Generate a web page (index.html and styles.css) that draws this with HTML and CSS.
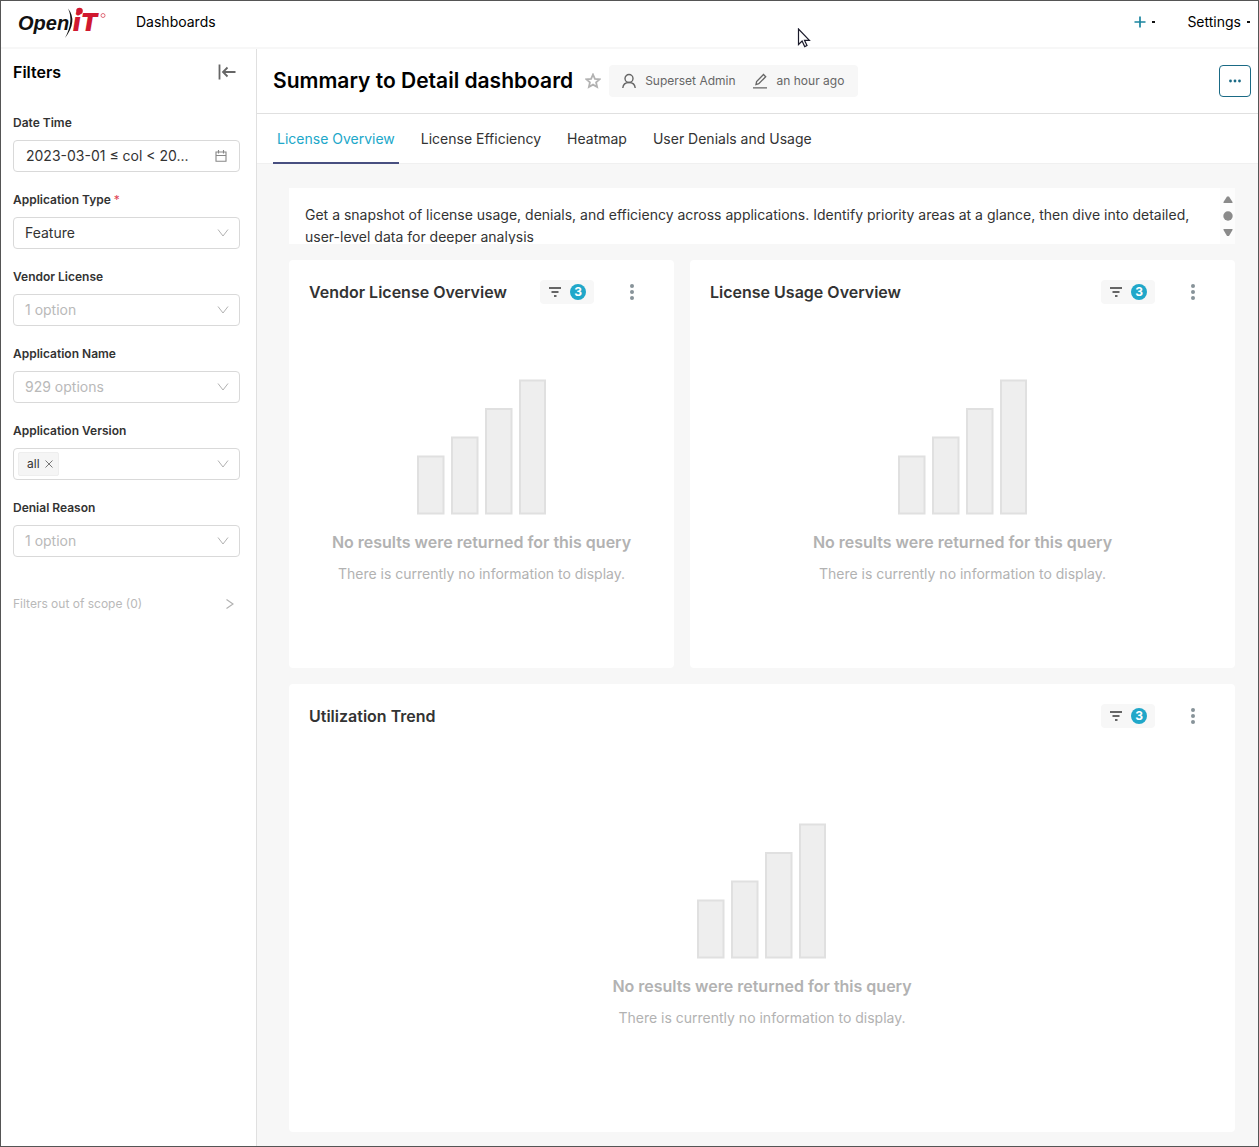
FILE: index.html
```html
<!DOCTYPE html>
<html lang="en">

<head>
    <meta charset="UTF-8">
    <meta name="viewport" content="width=device-width, initial-scale=1.0">
    <title>Summary to Detail dashboard</title>
    <link rel="stylesheet" href="styles.css">
</head>

<body>
    <!-- Shared icons -->
    <svg class="sprite" aria-hidden="true">
        <symbol id="chevron" viewBox="0 0 12 12">
            <path d="M1 2.5 L6 9 L11 2.5" fill="none" stroke="#b2b2b2" stroke-width="1" />
        </symbol>
        <symbol id="filter" viewBox="0 0 14 12">
            <path d="M1 2h12M3.500 6h7M6 10h2.500" fill="none" stroke="#666" stroke-width="2" />
        </symbol>
        <symbol id="dots" viewBox="0 0 4 16">
            <circle cx="2" cy="2" r="2" />
            <circle cx="2" cy="8" r="2" />
            <circle cx="2" cy="14" r="2" />
        </symbol>
        <symbol id="bars" viewBox="0 0 132 136">
            <g fill="#eee" stroke="#e0e0e0" stroke-width="2">
                <rect x="2" y="77.500" width="25.500" height="57" />
                <rect x="36" y="58.500" width="25.500" height="76" />
                <rect x="70" y="30" width="25.500" height="104.500" />
                <rect x="104" y="1.500" width="25" height="133" />
            </g>
        </symbol>
    </svg>

    <header class="navbar">
        <a class="logo" href="#" aria-label="Open iT">
            <svg width="90" height="34" viewBox="0 0 90 34">
                <text class="logo-open" x="1" y="25">Open</text>
                <path d="M51 3.500 Q61 16 48 33 Q57 16 51 3.500z" fill="#111" />
                <text class="logo-it" x="56" y="26">iT</text>
                <circle cx="62.500" cy="6" r="3.300" fill="#d0182f" />
                <circle cx="86" cy="10.500" r="2" fill="none" stroke="#e06a78" stroke-width="1" />
            </svg>
        </a>
        <nav class="nav-links">
            <a href="#">Dashboards</a>
        </nav>
        <div class="nav-right">
            <button class="nav-button" aria-label="New">
                <svg width="12" height="12" viewBox="0 0 12 12"><path d="M6 .5v11M.5 6h11" stroke="#1a85a0" stroke-width="1.700" /></svg>
                <span class="caret"></span>
            </button>
            <button class="nav-button">Settings <span class="caret"></span></button>
        </div>
        <svg class="cursor" width="14" height="20" viewBox="0 0 14 20" aria-hidden="true">
            <path d="M1.500 1v15.500l3.600-3.400 2.600 5.500 2.300-1.100-2.500-5.200h4.900z" fill="#fff" stroke="#1b1b2b" stroke-width="1.200" />
        </svg>
    </header>

    <div class="layout">
        <aside class="sidebar">
            <div class="sidebar-header">
                <h2>Filters</h2>
                <button class="icon-button" aria-label="Collapse filters">
                    <svg width="18" height="16" viewBox="0 0 18 16"><path d="M1.500 .5v15M5 8h12.500M9.500 3.500L5 8l4.500 4.500" fill="none" stroke="#666" stroke-width="1.800" /></svg>
                </button>
            </div>

            <div class="filter">
                <label for="date">Date Time</label>
                <button id="date" class="control date">
                    <span>2023-03-01 ≤ col &lt; 20...</span>
                    <svg width="12" height="12" viewBox="0 0 12 12"><path d="M1 2h10v9.300H1zM1 5.500h10M3.500 0v3.500M8.500 0v3.500" fill="none" stroke="#888" stroke-width="1.100" /></svg>
                </button>
            </div>

            <div class="filter">
                <label for="type">Application Type<span class="required">*</span></label>
                <div class="select">
                    <select id="type" class="control">
                        <option>Feature</option>
                    </select>
                    <svg class="chevron"><use href="#chevron" /></svg>
                </div>
            </div>

            <div class="filter">
                <label for="vendor">Vendor License</label>
                <div class="select">
                    <select id="vendor" class="control empty">
                        <option>1 option</option>
                    </select>
                    <svg class="chevron"><use href="#chevron" /></svg>
                </div>
            </div>

            <div class="filter">
                <label for="name">Application Name</label>
                <div class="select">
                    <select id="name" class="control empty">
                        <option>929 options</option>
                    </select>
                    <svg class="chevron"><use href="#chevron" /></svg>
                </div>
            </div>

            <div class="filter">
                <label for="version">Application Version</label>
                <div class="control tags">
                    <span class="tag">all
                        <button aria-label="Remove all">
                            <svg width="8" height="8" viewBox="0 0 8 8"><path d="M.5 .5l7 7M7.500 .5l-7 7" stroke="#777" /></svg>
                        </button>
                    </span>
                    <input id="version" type="text">
                    <svg class="chevron"><use href="#chevron" /></svg>
                </div>
            </div>

            <div class="filter">
                <label for="denial">Denial Reason</label>
                <div class="select">
                    <select id="denial" class="control empty">
                        <option>1 option</option>
                    </select>
                    <svg class="chevron"><use href="#chevron" /></svg>
                </div>
            </div>

            <button class="out-of-scope">
                Filters out of scope (0)
                <svg width="8" height="12" viewBox="0 0 8 12"><path d="M.5 1.500L7 6 .5 10.500" fill="none" stroke="#b2b2b2" stroke-width="1.200" /></svg>
            </button>
        </aside>

        <main>
            <div class="title-bar">
                <h1>Summary to Detail dashboard</h1>
                <button class="icon-button" aria-label="Favorite">
                    <svg width="16" height="16" viewBox="0 0 16 16"><path d="M8 1.500l1.900 4.300 4.700.500-3.500 3.100 1 4.600L8 11.600 3.900 14l1-4.600L1.400 6.300l4.700-.500z" fill="none" stroke="#b2b2b2" stroke-width="1.800" /></svg>
                </button>
                <div class="meta">
                    <svg width="14" height="16" viewBox="0 0 14 16"><g fill="none" stroke="#666" stroke-width="1.400"><circle cx="7" cy="5.500" r="4" /><path d="M.8 15c.3-3.500 3-5.500 6.200-5.500s5.900 2 6.200 5.500" /></g></svg>
                    <span class="owner">Superset Admin</span>
                    <svg width="16" height="16" viewBox="0 0 16 16"><path d="M1 14.800h14M4 11.500l.6-3L11.500 1.500l2.200 2.200-6.900 7z" fill="none" stroke="#666" stroke-width="1.300" /></svg>
                    <span>an hour ago</span>
                </div>
                <button class="more" aria-label="More options">
                    <svg width="12" height="4" viewBox="0 0 12 4"><g fill="#1a6a85"><circle cx="1.500" cy="2" r="1.400" /><circle cx="6" cy="2" r="1.400" /><circle cx="10.500" cy="2" r="1.400" /></g></svg>
                </button>
            </div>

            <nav class="tabs">
                <a class="active" href="#">License Overview</a>
                <a href="#">License Efficiency</a>
                <a href="#">Heatmap</a>
                <a href="#">User Denials and Usage</a>
            </nav>

            <div class="grid">
                <div class="note">
                    <p>Get a snapshot of license usage, denials, and efficiency across applications. Identify priority areas at a glance, then dive into detailed, user-level data for deeper analysis</p>
                    <div class="scrollbar">
                        <svg width="10" height="42" viewBox="0 0 10 42"><g fill="#8a8a8a"><path d="M4 1.500h2L9.500 7v1h-9V7z" /><circle cx="5" cy="21" r="4.700" /><path d="M4 41h2l3.500-6v-1h-9v1z" /></g></svg>
                    </div>
                </div>

                <section class="card">
                    <div class="card-header">
                        <h3>Vendor License Overview</h3>
                        <button class="chip" aria-label="Applied filters"><svg width="14" height="12"><use href="#filter" /></svg><span class="badge">3</span></button>
                        <button class="menu" aria-label="Chart menu"><svg width="4" height="16"><use href="#dots" /></svg></button>
                    </div>
                    <div class="no-results">
                        <svg width="132" height="136"><use href="#bars" /></svg>
                        <h4>No results were returned for this query</h4>
                        <p>There is currently no information to display.</p>
                    </div>
                </section>

                <section class="card">
                    <div class="card-header">
                        <h3>License Usage Overview</h3>
                        <button class="chip" aria-label="Applied filters"><svg width="14" height="12"><use href="#filter" /></svg><span class="badge">3</span></button>
                        <button class="menu" aria-label="Chart menu"><svg width="4" height="16"><use href="#dots" /></svg></button>
                    </div>
                    <div class="no-results">
                        <svg width="132" height="136"><use href="#bars" /></svg>
                        <h4>No results were returned for this query</h4>
                        <p>There is currently no information to display.</p>
                    </div>
                </section>

                <section class="card wide">
                    <div class="card-header">
                        <h3>Utilization Trend</h3>
                        <button class="chip" aria-label="Applied filters"><svg width="14" height="12"><use href="#filter" /></svg><span class="badge">3</span></button>
                        <button class="menu" aria-label="Chart menu"><svg width="4" height="16"><use href="#dots" /></svg></button>
                    </div>
                    <div class="no-results">
                        <svg width="132" height="136"><use href="#bars" /></svg>
                        <h4>No results were returned for this query</h4>
                        <p>There is currently no information to display.</p>
                    </div>
                </section>
            </div>
        </main>
    </div>
</body>

</html>
```
FILE: styles.css
```css
* {
    box-sizing: border-box;
}

body {
    display: flex;
    flex-direction: column;
    min-height: 100vh;
    margin: 0;
    border: 1px solid #555;
    font-family: Inter, "Liberation Sans", sans-serif;
    font-size: 14px;
    line-height: 22px;
    color: #333;
    background-color: #fff;
}

h1, h2, h3, h4, p {
    margin: 0;
}

a {
    color: inherit;
    text-decoration: none;
}

button, input, select {
    font: inherit;
    color: inherit;
    border: none;
    background: none;
    padding: 0;
    margin: 0;
    cursor: pointer;
}

svg {
    display: block;
    flex: none;
}

.sprite {
    position: absolute;
    width: 0;
    height: 0;
}

/* Navbar */
.navbar {
    position: relative;
    display: flex;
    align-items: center;
    height: 48px;
    padding: 0 8px 4px 16px;
    border-bottom: 2px solid #f7f7f7;
    color: #000;
}

.logo-open {
    font: italic bold 20px "Liberation Sans", sans-serif;
    fill: #111;
}

.logo-it {
    font: italic 900 25px Inter, sans-serif;
    fill: #d0182f;
}

.nav-links {
    flex: 1;
    margin-left: 29px;
}

.nav-right {
    display: flex;
    gap: 32px;
}

.nav-button {
    display: flex;
    align-items: center;
    gap: 6px;
}

.caret {
    width: 3px;
    height: 2px;
    background-color: #111;
}

.cursor {
    position: absolute;
    left: 796px;
    top: 27px;
}

.layout {
    display: flex;
    flex: 1;
}

/* Filters */
.sidebar {
    width: 256px;
    flex: none;
    padding: 11px 16px 12px 12px;
    border-right: 1px solid #e0e0e0;
}

.sidebar-header {
    display: flex;
    align-items: center;
    justify-content: space-between;
    height: 24px;
    margin-bottom: 31px;
    padding-right: 4px;
}

.sidebar-header h2 {
    font-size: 16px;
    font-weight: 600;
    color: #000;
}

.filter {
    margin-bottom: 20px;
}

.filter label {
    display: block;
    margin-bottom: 9px;
    font-size: 12px;
    font-weight: 600;
    line-height: 16px;
}

.required {
    margin-left: 3px;
    font-weight: 400;
    color: #e04355;
}

.control {
    display: flex;
    align-items: center;
    width: 100%;
    height: 32px;
    padding: 0 12px;
    border: 1px solid #d9d9d9;
    border-radius: 4px;
    background-color: #fff;
}

.date {
    justify-content: space-between;
    white-space: nowrap;
}

.select {
    display: grid;
    align-items: center;
}

.select > * {
    grid-area: 1 / 1;
}

.select select {
    appearance: none;
    padding: 0 32px 0 11px;
}

.empty {
    color: #b9b9b9;
}

.chevron {
    width: 12px;
    height: 12px;
    pointer-events: none;
}

.select .chevron {
    justify-self: end;
    margin-right: 11px;
}

.tags {
    padding: 0 10px 0 4px;
}

.tags input {
    flex: 1;
    min-width: 0;
    outline: none;
}

.tag {
    display: flex;
    align-items: center;
    gap: 5px;
    height: 24px;
    padding: 0 5px 0 8px;
    border: 1px solid #eee;
    border-radius: 2px;
    background-color: #f5f5f5;
    font-size: 12px;
}

.out-of-scope {
    display: flex;
    align-items: center;
    justify-content: space-between;
    width: 100%;
    margin-top: 36px;
    padding-right: 6px;
    font-size: 12px;
    color: #b9b9b9;
}

/* Dashboard */
main {
    display: flex;
    flex-direction: column;
    flex: 1;
    min-width: 0;
}

.title-bar {
    display: flex;
    align-items: center;
    gap: 8px;
    height: 65px;
    padding: 0 7px 0 16px;
    border-bottom: 1px solid #e0e0e0;
}

.title-bar h1 {
    margin-right: 4px;
    font-size: 21px;
    font-weight: 600;
    line-height: 28px;
    color: #000;
}

.meta {
    display: flex;
    align-items: center;
    gap: 9px;
    height: 32px;
    padding: 0 14px 0 13px;
    border-radius: 4px;
    background-color: #f7f7f7;
    font-size: 12px;
    color: #666;
}

.owner {
    margin-right: 7px;
}

.more {
    display: flex;
    align-items: center;
    justify-content: center;
    width: 32px;
    height: 32px;
    margin-left: auto;
    border: 1px solid #1a6a85;
    border-radius: 4px;
}

.tabs {
    display: flex;
    gap: 18px;
    height: 50px;
    padding-left: 16px;
    border-bottom: 1px solid #f0f0f0;
}

.tabs a {
    height: 50px;
    padding: 0 4px;
    line-height: 50px;
}

.tabs .active {
    border-bottom: 2px solid #484f80;
    color: #20a7c9;
}

.grid {
    display: grid;
    grid-template-columns: 385fr 545fr;
    grid-template-rows: 56px minmax(408px, auto) minmax(448px, auto);
    gap: 16px;
    flex: 1;
    align-content: start;
    padding: 24px 23px 14px 32px;
    background-color: #f7f7f7;
}

.note {
    display: flex;
    grid-column: 1 / -1;
    overflow: hidden;
    background-color: #fff;
}

.note p {
    flex: 1;
    padding: 16px;
}

.scrollbar {
    display: flex;
    align-items: center;
    justify-content: center;
    width: 15px;
    height: 56px;
    background-color: #fcfcfc;
}

.card {
    display: flex;
    flex-direction: column;
    padding: 20px;
    border-radius: 4px;
    background-color: #fff;
}

.wide {
    grid-column: 1 / -1;
}

.card-header {
    display: flex;
    align-items: center;
    gap: 16px;
    height: 24px;
}

.card-header h3 {
    flex: 1;
    font-size: 16px;
    font-weight: 600;
}

.chip {
    display: flex;
    align-items: center;
    gap: 8px;
    height: 24px;
    padding: 0 8px;
    border-radius: 4px;
    background-color: #f7f7f7;
}

.badge {
    width: 16px;
    height: 16px;
    border-radius: 50%;
    background-color: #20a7c9;
    color: #fff;
    font-size: 12px;
    font-weight: 700;
    line-height: 16px;
    text-align: center;
}

.menu {
    display: flex;
    justify-content: center;
    width: 44px;
    fill: #879399;
}

.no-results {
    display: flex;
    flex: 1;
    flex-direction: column;
    align-items: center;
    justify-content: center;
    padding-top: 12px;
    color: #b2b2b2;
}

.no-results h4 {
    margin: 16px 0 10px;
    font-size: 16px;
    font-weight: 600;
}
```
